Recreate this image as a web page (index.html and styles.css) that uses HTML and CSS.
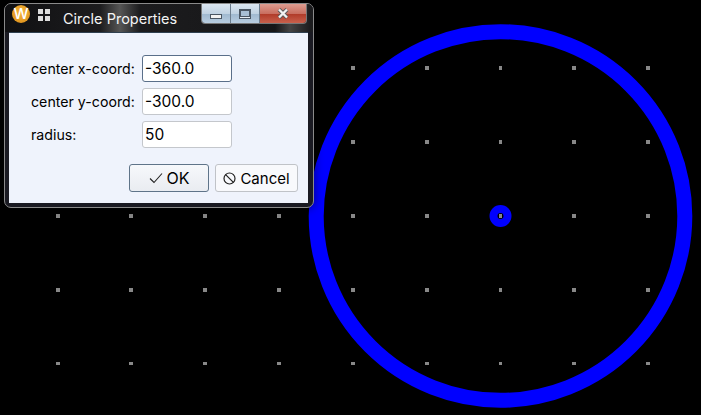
FILE: index.html
```html
<!DOCTYPE html>
<html lang="en">
<head>
    <meta charset="UTF-8">
    <title>Circle Properties</title>
    <link rel="stylesheet" href="styles.css">
</head>
<body>

    <div class="desktop">
        <svg class="canvas" width="701" height="415" viewBox="0 0 701 415">
            <g class="dots">
                <rect x="56" y="214" width="4" height="4"/><rect x="129" y="214" width="4" height="4"/><rect x="203" y="214" width="4" height="4"/><rect x="277" y="214" width="4" height="4"/>
                <rect x="56" y="288" width="4" height="4"/><rect x="129" y="288" width="4" height="4"/><rect x="203" y="288" width="4" height="4"/><rect x="277" y="288" width="4" height="4"/>
                <rect x="56" y="362" width="4" height="3"/><rect x="129" y="362" width="4" height="3"/><rect x="203" y="362" width="4" height="3"/><rect x="277" y="362" width="4" height="3"/>

                <rect x="351" y="66" width="4" height="4"/><rect x="425" y="66" width="4" height="4"/><rect x="499" y="66" width="3" height="4"/><rect x="572" y="66" width="4" height="4"/><rect x="646" y="66" width="4" height="4"/>
                <rect x="351" y="140" width="4" height="4"/><rect x="425" y="140" width="4" height="4"/><rect x="499" y="140" width="3" height="4"/><rect x="572" y="140" width="4" height="4"/><rect x="646" y="140" width="4" height="4"/>
                <rect x="351" y="214" width="4" height="4"/><rect x="425" y="214" width="4" height="4"/><rect x="499" y="214" width="3" height="4"/><rect x="572" y="214" width="4" height="4"/><rect x="646" y="214" width="4" height="4"/>
                <rect x="351" y="288" width="4" height="4"/><rect x="425" y="288" width="4" height="4"/><rect x="499" y="288" width="3" height="4"/><rect x="572" y="288" width="4" height="4"/><rect x="646" y="288" width="4" height="4"/>
                <rect x="351" y="362" width="4" height="3"/><rect x="425" y="362" width="4" height="3"/><rect x="499" y="362" width="3" height="3"/><rect x="572" y="362" width="4" height="3"/><rect x="646" y="362" width="4" height="3"/>
            </g>
            <circle class="ring" cx="500.5" cy="216" r="184.3" stroke-width="15"/>
            <circle class="ring" cx="500.5" cy="216" r="7" stroke-width="8"/>
        </svg>

        <div class="dialog">
            <div class="titlebar">
                <span class="app-icon">W</span>
                <svg class="grid-icon" width="13" height="13" viewBox="0 0 13 13">
                    <rect x="0" y="0" width="5" height="5"/><rect x="7" y="0" width="5" height="5"/>
                    <rect x="0" y="7" width="5" height="5"/><rect x="7" y="7" width="5" height="5"/>
                </svg>
                <span class="title">Circle Properties</span>
                <div class="controls">
                    <div class="ctl ctl-min"><span class="min-glyph"></span></div>
                    <div class="ctl ctl-max"><span class="max-glyph"></span></div>
                    <div class="ctl ctl-close">
                        <svg width="14" height="11" viewBox="0 0 14 11">
                            <path d="M3 1.5 L11 9.5 M11 1.5 L3 9.5" stroke="#5a5a5a" stroke-width="4.2" fill="none"/>
                            <path d="M3 1.5 L11 9.5 M11 1.5 L3 9.5" stroke="#f2f2f2" stroke-width="2.4" fill="none"/>
                        </svg>
                    </div>
                </div>
            </div>

            <div class="content">
                <form class="fields">
                    <label for="cx">center x-coord:</label>
                    <input class="focused" id="cx" type="text" value="-360.0">
                    <label for="cy">center y-coord:</label>
                    <input id="cy" type="text" value="-300.0">
                    <label for="rad">radius:</label>
                    <input id="rad" type="text" value="50">
                </form>
                <div class="buttons">
                    <button class="btn btn-ok" type="button">
                        <svg width="14" height="12" viewBox="0 0 14 12"><path d="M1 6.5 L5 10.5 L13 1.5" stroke="#222" stroke-width="1.1" fill="none"/></svg>
                        OK
                    </button>
                    <button class="btn btn-cancel" type="button">
                        <svg width="13" height="13" viewBox="0 0 13 13"><circle cx="6.5" cy="6.5" r="5.5" stroke="#222" stroke-width="1.2" fill="none"/><path d="M2.6 2.6 L10.4 10.4" stroke="#222" stroke-width="1.2"/></svg>
                        Cancel
                    </button>
                </div>
            </div>
        </div>
    </div>

</body>
</html>
```

FILE: styles.css
```css
* {
    margin: 0;
    padding: 0;
    box-sizing: border-box;
}

body {
    background: #000;
    overflow: hidden;
}

.desktop {
    position: relative;
    width: 701px;
    height: 415px;
    background: #000;
    font-family: 'Inter', sans-serif;
}

.canvas {
    position: absolute;
    top: 0;
    left: 0;
}

.dots rect {
    fill: #888;
    shape-rendering: crispEdges;
}

.ring {
    fill: none;
    stroke: #0000ff;
}

.dialog {
    position: absolute;
    top: 3px;
    left: 4px;
    width: 310px;
    height: 205px;
    display: flex;
    flex-direction: column;
    border: 1px solid #8a8a8a;
    border-radius: 7px;
    background: #1a1a22;
    padding: 0 5px 4px 4px;
    box-shadow: 0 0 10px rgba(0, 0, 0, 0.5);
}

.titlebar {
    height: 28px;
    flex: none;
    display: flex;
    align-items: flex-start;
    margin: 0 -5px 0 -4px;
    padding-left: 7px;
    border-radius: 6px 6px 0 0;
    background: linear-gradient(90deg, #101012 0, #1c1c1e 95px, #555 115px, #1c1c1e 135px, #161618 270px, #444 285px, #1c1c1e 305px);
}

.app-icon {
    width: 18px;
    height: 18px;
    margin-top: 1px;
    border-radius: 50%;
    background: radial-gradient(circle at 50% 40%, #f6b73c, #d98a16);
    color: #fff;
    font-size: 15px;
    font-weight: 500;
    line-height: 18px;
    text-align: center;
}

.grid-icon {
    margin: 5px 0 0 8px;
    fill: #ddd;
}

.title {
    margin: 6px 0 0 12px;
    color: #f4f4f4;
    font-size: 14.5px;
    line-height: 18px;
    white-space: nowrap;
}

.controls {
    display: flex;
    height: 20px;
    margin-left: auto;
    margin-right: 6px;
    border: 1px solid #777;
    border-top: 0;
    border-radius: 0 0 4px 4px;
    overflow: hidden;
}

.ctl {
    display: flex;
    align-items: center;
    justify-content: center;
    height: 100%;
}

.ctl-min,
.ctl-max {
    width: 29px;
    background: linear-gradient(180deg, #dbe6f0 0, #c0d2e2 50%, #9fb8cf 52%, #b8cde0 100%);
    border-right: 1px solid #6b7c8c;
}

.ctl-close {
    width: 46px;
    background: linear-gradient(180deg, #dd9c90 0, #c96f60 50%, #b03a28 52%, #c8604c 100%);
}

.min-glyph {
    width: 12px;
    height: 5px;
    margin-top: 6px;
    background: #f2f2f2;
    border: 1px solid #4a5663;
}

.max-glyph {
    width: 12px;
    height: 10px;
    display: flex;
    align-items: center;
    justify-content: center;
    background: #e6edf3;
    border: 1px solid #4a5663;
}

.max-glyph::after {
    content: "";
    width: 8px;
    height: 5px;
    background: #a8bfd4;
    border: 1px solid #4a5663;
}

.content {
    flex: 1;
    display: flex;
    flex-direction: column;
    align-items: flex-start;
    padding: 22px 10px 0 22px;
    border-top: 1px solid #2f4050;
    background: #eff3fc;
}

.fields {
    display: grid;
    grid-template-columns: 111px 90px;
    grid-auto-rows: 27px;
    row-gap: 6px;
    align-items: center;
    font-size: 14.2px;
    color: #000;
}

.fields input {
    width: 100%;
    height: 27px;
    padding: 0 2px;
    border: 1px solid #c4c7cc;
    border-radius: 3px;
    background: #fff;
    color: #000;
    font: inherit;
    font-size: 15.5px;
    outline: none;
}

.fields input.focused {
    border-color: #5a6f8a;
}

.buttons {
    display: flex;
    gap: 6px;
    align-self: flex-end;
    margin-top: 16px;
}

.btn {
    height: 28px;
    display: flex;
    align-items: center;
    justify-content: center;
    gap: 4px;
    border: 1px solid #c0c3c8;
    border-radius: 3px;
    background: #f8f9fc;
    color: #000;
    font-family: inherit;
    font-size: 15px;
}

.btn-ok {
    width: 80px;
    border-color: #5f7489;
    background: linear-gradient(180deg, #f6f8fb, #e9ecf1);
    font-size: 16px;
}

.btn-cancel {
    width: 83px;
}
```
